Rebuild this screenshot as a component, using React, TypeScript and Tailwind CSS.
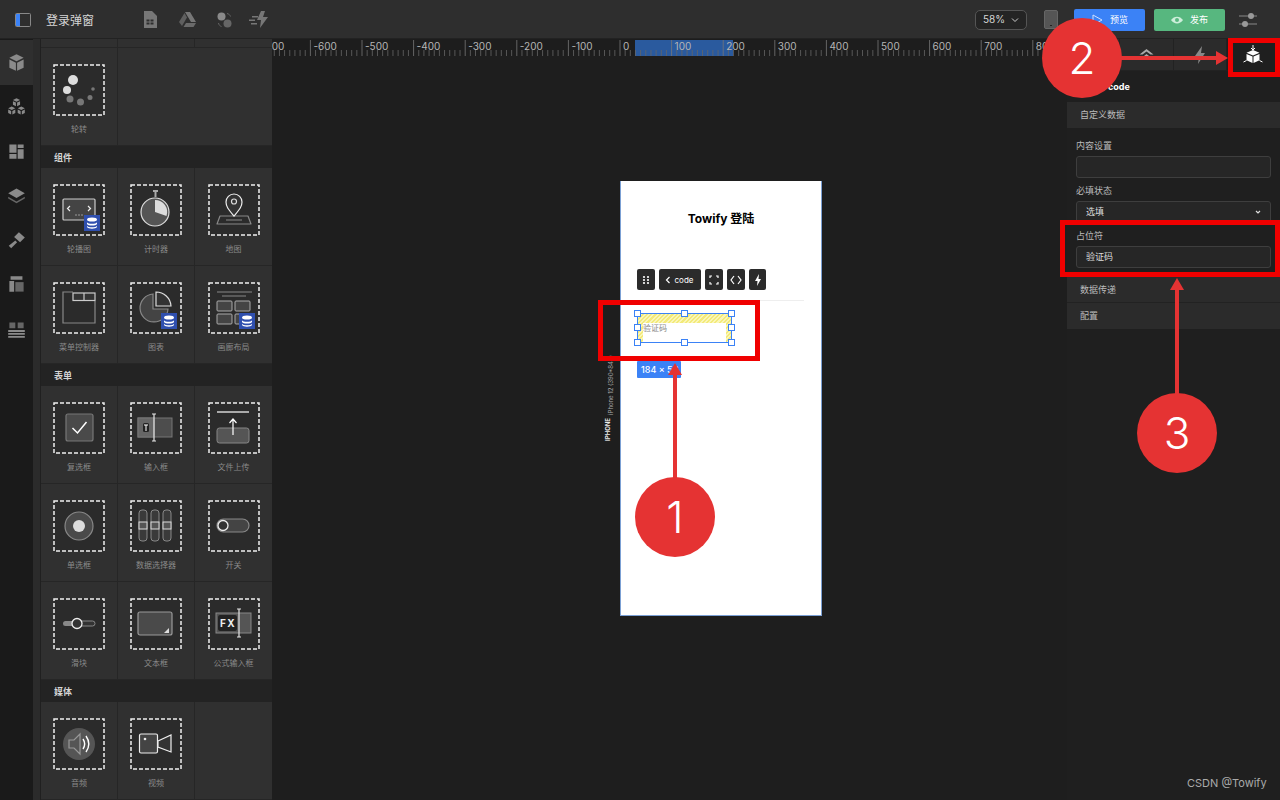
import React from 'react';

const font = { fontFamily: '"Inter", "Noto Sans CJK SC", sans-serif' };

const Db = () => (
  <g>
    <rect x="31" y="31" width="16" height="16" fill="#2f4fae" />
    <ellipse cx="39" cy="35.5" rx="5" ry="2" fill="#fff" />
    <path d="M34 38.2c1 2 9 2 10 0v1.8c-1 2-9 2-10 0zM34 41.8c1 2 9 2 10 0v1.2c-1 2.2-9 2.2-10 0z" fill="#fff" />
  </g>
);

const IBeam = ({ x, y1, y2 }: { x: number; y1: number; y2: number }) => (
  <path d={`M${x - 2} ${y1}h4M${x} ${y1}V${y2}M${x - 2} ${y2}h4`} stroke="#e5e5e5" strokeWidth="1.2" fill="none" />
);

const glyphs: Record<string, React.ReactNode> = {
  spin: (
    <>
      <circle cx="20" cy="16" r="5" fill="#ddd" />
      <circle cx="14" cy="26" r="4" fill="#ddd" />
      <circle cx="17" cy="35" r="3.5" fill="#777" />
      <circle cx="27.5" cy="38" r="3.5" fill="#777" />
      <circle cx="37" cy="33.5" r="2.5" fill="#777" />
      <circle cx="40" cy="25" r="1.8" fill="#777" />
    </>
  ),
  carousel: (
    <>
      <rect x="10" y="15" width="32" height="21" rx="1" fill="#444" stroke="#ccc" strokeWidth="1.2" />
      <path d="M17 22l-2.5 2.5L17 27M35 22l2.5 2.5L35 27" stroke="#eee" strokeWidth="1.2" fill="none" />
      <path d="M22 31h2M25 31h2M28 31h2" stroke="#999" strokeWidth="1" />
      <Db />
    </>
  ),
  timer: (
    <>
      <path d="M23 7h5M25.5 8v5" stroke="#aaa" strokeWidth="2" />
      <circle cx="25" cy="28" r="14" fill="#555" stroke="#ddd" strokeWidth="1.2" />
      <path d="M25 16a12 12 0 0 1 11.5 16L25 28z" fill="#ddd" />
    </>
  ),
  map: (
    <>
      <path d="M12 32h28l3 8H9z" fill="none" stroke="#888" strokeWidth="1.2" strokeLinejoin="round" />
      <path d="M18 36h16" stroke="#888" strokeWidth="1" />
      <path d="M26 32c-5-6-8-9-8-14a8 8 0 0 1 16 0c0 5-3 8-8 14z" fill="#333" stroke="#eee" strokeWidth="1.2" />
      <circle cx="26" cy="17.500" r="2.500" fill="none" stroke="#ddd" strokeWidth="1.200" />
    </>
  ),
  menu: (
    <>
      <path d="M20 10H10v31h32V19" fill="none" stroke="#888" strokeWidth="1.2" />
      <rect x="20" y="11" width="22" height="7.500" fill="#333" stroke="#ccc" strokeWidth="1.2" />
      <path d="M31 11v7.500" stroke="#ccc" strokeWidth="1.2" />
    </>
  ),
  chart: (
    <>
      <path d="M23 12a14 14 0 1 0 15 15H23z" fill="#444" stroke="#888" strokeWidth="1.2" />
      <path d="M26 10a15 15 0 0 1 15 14H26z" fill="#333" stroke="#ddd" strokeWidth="1.2" />
      <Db />
    </>
  ),
  gallery: (
    <>
      <path d="M9 10h35M14 14h24" stroke="#888" strokeWidth="1" />
      <rect x="9" y="19" width="15" height="10" rx="1" fill="#444" stroke="#aaa" />
      <rect x="27" y="19" width="15" height="10" rx="1" fill="#444" stroke="#aaa" />
      <rect x="9" y="32" width="15" height="10" rx="1" fill="#444" stroke="#aaa" />
      <rect x="27" y="32" width="15" height="10" rx="1" fill="#444" stroke="#aaa" />
      <Db />
    </>
  ),
  check: (
    <>
      <rect x="13" y="12" width="27" height="27" rx="2" fill="#4a4a4a" stroke="#777" strokeWidth="1.2" />
      <path d="M19.500 26l5 5 9-11" stroke="#fff" strokeWidth="1.500" fill="none" />
    </>
  ),
  input: (
    <>
      <rect x="8" y="16" width="34" height="19" fill="#4d4d4d" stroke="#777" />
      <rect x="8" y="16" width="16" height="19" fill="#666" stroke="#777" />
      <rect x="13" y="21" width="6" height="9" rx="1.500" fill="#222" />
      <path d="M14 23h4M16 23v6" stroke="#fff" strokeWidth="1" />
      <IBeam x={24} y1={12} y2={39} />
    </>
  ),
  upload: (
    <>
      <path d="M9 10h32" stroke="#eee" strokeWidth="1.300" />
      <rect x="9" y="26" width="32" height="15" rx="2.500" fill="#555" stroke="#888" />
      <path d="M25 33V17M21.500 21l3.500-4 3.500 4" stroke="#fff" strokeWidth="1.200" fill="none" />
    </>
  ),
  radio: (
    <>
      <circle cx="26" cy="26" r="14" fill="#4a4a4a" stroke="#888" strokeWidth="1.200" />
      <circle cx="26" cy="26" r="6" fill="#ddd" />
    </>
  ),
  picker: (
    <>
      {[9, 21, 33].map(x => (
        <g key={x}>
          <rect x={x} y="10" width="8" height="31" rx="3" fill="#3a3a3a" stroke="#888" />
          <rect x={x} y="22" width="8" height="7" fill="#555" stroke="#ddd" />
        </g>
      ))}
    </>
  ),
  toggle: (
    <>
      <rect x="9" y="19" width="32" height="13" rx="6.500" fill="#444" stroke="#888" strokeWidth="1.200" />
      <circle cx="15" cy="25.500" r="5" fill="#333" stroke="#eee" strokeWidth="1.300" />
    </>
  ),
  slider: (
    <>
      <rect x="10" y="23" width="14" height="5" rx="2.500" fill="#888" />
      <rect x="24" y="23" width="18" height="5" rx="2.500" fill="#333" stroke="#888" />
      <circle cx="24" cy="25.500" r="5" fill="#333" stroke="#eee" strokeWidth="1.300" />
    </>
  ),
  textarea: (
    <>
      <rect x="8" y="14" width="34" height="23" rx="2" fill="#4a4a4a" stroke="#999" strokeWidth="1.200" />
      <path d="M39 30v5h-5z" fill="#ddd" />
    </>
  ),
  formula: (
    <>
      <rect x="8" y="15" width="35" height="20" fill="#555" stroke="#888" />
      <rect x="10" y="17" width="19" height="16" rx="2" fill="#222" />
      <text x="12" y="29" fontSize="10" fontWeight="700" fill="#eee" letterSpacing="1.500" fontFamily="Inter, sans-serif">FX</text>
      <IBeam x={31} y1={11} y2={39} />
    </>
  ),
  audio: (
    <>
      <circle cx="26" cy="26" r="16" fill="#555" />
      <path d="M16 22h5l6-6v20l-6-6h-5z" fill="none" stroke="#999" strokeWidth="1.200" />
      <path d="M30 21c2 3 2 7 0 10M33 18c3.500 5 3.500 11 0 16" fill="none" stroke="#fff" strokeWidth="1.400" />
    </>
  ),
  video: (
    <>
      <rect x="9.500" y="16" width="18" height="19" rx="1.500" fill="#444" stroke="#eee" strokeWidth="1.200" />
      <circle cx="15" cy="21" r="1.300" fill="#eee" />
      <path d="M28 23l13-6v17l-13-5z" fill="#333" stroke="#eee" strokeWidth="1.200" />
    </>
  ),
};

const Tile = ({ name, label, last }: { name?: string; label?: string; last?: boolean }) => (
  <div className={`h-[98px] flex flex-col items-center pt-4 border-b border-[#262626] ${last ? '' : 'border-r'}`}>
    {name && (
      <>
        <svg className="w-[52px] h-[52px]" viewBox="0 0 52 52">
          <rect x="1" y="1" width="50" height="50" fill="#262626" fillOpacity="0.4" stroke="#f0f0f0" strokeWidth="1.500" strokeDasharray="4 2" />
          {glyphs[name]}
        </svg>
        <span className="mt-[7px] text-[8px] leading-3 text-[#8a8a8a]">{label}</span>
      </>
    )}
  </div>
);

const Section = ({ title }: { title: string }) => (
  <div className="h-[22px] pt-px bg-[#232323] flex items-center pl-[13px] text-[9px] font-bold text-[#d5d5d5]">{title}</div>
);

const Grid = ({ children }: { children: React.ReactNode }) => <div className="grid grid-cols-3">{children}</div>;

const RailIcon = ({ children, active }: { children: React.ReactNode; active?: boolean }) => (
  <div className={`h-[44.500px] w-[33px] flex items-center justify-center ${active ? 'bg-[#2f2f2f]' : ''}`}>
    <svg className="w-[19px] h-[19px]" viewBox="0 0 16 16" fill="#8a8a8a">{children}</svg>
  </div>
);

const Ruler = () => {
  const zero = 620 - 272;
  const step = 51.6;
  const majors = Array.from({ length: 16 }, (_, i) => i - 7);
  return (
    <div className="h-[17px] bg-[#1d1d1d] overflow-hidden">
      <svg className="w-[795px] h-[17px]" viewBox="0 0 795 17">
        <rect x="363" y="1" width="98" height="16" fill="#2a5a9e" />
        {majors.map(m => (
          <g key={m}>
            <path d={`M${zero + m * step} 1V17`} stroke="#777" strokeWidth="0.800" />
            {[1, 2, 3, 4, 5, 6, 7, 8, 9].map(t => (
              <path key={t} d={`M${zero + (m + t / 10) * step} 11V17`} stroke="#666" strokeWidth="0.800" />
            ))}
            <text x={zero + m * step + 3} y="10.500" fontSize="10" fill="#b5b5b5" fontFamily="Inter, sans-serif">{m * 100}</text>
          </g>
        ))}
      </svg>
    </div>
  );
};

const ToolBtn = ({ w, children }: { w: string; children: React.ReactNode }) => (
  <div className={`${w} h-[21px] bg-[#2b2b2b] rounded-[2px] flex items-center justify-center text-white`}>{children}</div>
);

const Handle = ({ className }: { className: string }) => (
  <div className={`absolute w-[7px] h-[7px] bg-white border border-[#3b82f6] ${className}`} />
);

const Bubble = ({ n, className }: { n: number; className: string }) => (
  <div className={`absolute w-20 h-20 rounded-full bg-[#e53333] flex items-center justify-center text-white text-[44px] font-light ${className}`}>{n}</div>
);

const RedBox = ({ className }: { className: string }) => (
  <div className={`absolute border-[5px] border-[#f00000] ${className}`} />
);

export default function App() {
  return (
    <div className="relative w-[1280px] h-[800px] overflow-hidden bg-[#1e1e1e] flex flex-col" style={font}>
      {/* top bar */}
      <div className="h-[39px] shrink-0 pt-px bg-[#2e2e2e] border-b border-[#222] flex items-center pl-[15px]">
        <svg className="w-4 h-[14px]" viewBox="0 0 16 14">
          <rect x="0.500" y="0.500" width="15" height="13" rx="1" fill="none" stroke="#888" />
          <rect x="1" y="1" width="4" height="12" fill="#3b82f6" />
        </svg>
        <span className="ml-[15px] mt-[3px] text-xs text-[#d5d5d5] w-[90px]">登录弹窗</span>
        <svg className="ml-[7px] w-[14px] h-[17px]" viewBox="0 0 14 17" fill="#777">
          <path d="M1 0h8l5 5v12H1z" />
          <path d="M3.500 8.500h3v2h-3zM7.500 8.500h3v2h-3zM3.500 11.500h3v2h-3zM7.500 11.500h3v2h-3z" fill="#2e2e2e" />
        </svg>
        <svg className="ml-[22px] w-[17px] h-[15px]" viewBox="0 0 17 15" fill="#777">
          <path d="M6 0h5l6 10h-5z" />
          <path d="M5.500 1l2.500 4.500L3 14 0 10z" fill="#5f5f5f" />
          <path d="M4.500 15l2.500-4h10l-2.500 4z" fill="#6a6a6a" />
        </svg>
        <svg className="ml-[21px] w-[15px] h-[16px]" viewBox="0 0 15 16">
          <circle cx="4.500" cy="4.500" r="4" fill="#8a8a8a" />
          <circle cx="10.500" cy="11.500" r="4" fill="#666" />
          <path d="M10 1.500c2 .5 3 1.500 3.500 3M1.500 11c.3 2 1.500 3 3 3.500" fill="none" stroke="#666" />
        </svg>
        <svg className="ml-[17px] w-[19px] h-[17px]" viewBox="0 0 19 17" fill="#777">
          <path d="M12 0l-4 9h4l-1 8 8-11h-5l2-6z" />
          <path d="M3 5h6v1.500H3zM0 8.500h6V10H0zM2 12h6v1.500H2z" />
        </svg>
        <div className="ml-auto flex items-center">
          <div className="w-[52px] h-5 rounded-[5px] bg-[#242424] border border-[#555] flex items-center justify-center gap-[6px] text-[10px] text-[#d5d5d5]">
            <span>58%</span>
            <svg className="w-2 h-2" viewBox="0 0 8 8" fill="none" stroke="#ccc"><path d="M1 2.500l3 3 3-3" /></svg>
          </div>
          <div className="ml-[17px] w-[14px] h-[19px] rounded-[2px] bg-[#555] border border-[#666] flex items-end justify-center pb-[2px]">
            <div className="w-[1.500px] h-[1.500px] bg-[#222]" />
          </div>
          <div className="ml-[16px] w-[71px] h-[22px] rounded-[2px] bg-[#3b82f6] flex items-center justify-center gap-[7px] text-[9px] text-white">
            <svg className="w-3 h-3" viewBox="0 0 12 12" fill="none" stroke="#cfe0ff"><path d="M2 1l9 5-9 5z" /></svg>
            预览
          </div>
          <div className="ml-[9px] w-[71px] h-[22px] rounded-[2px] bg-[#57b77f] flex items-center justify-center gap-[7px] text-[9px] text-white">
            <svg className="w-3 h-3" viewBox="0 0 12 12">
              <path d="M0 6c3-4.500 9-4.500 12 0-3 4.500-9 4.500-12 0z" fill="#cdeeda" />
              <circle cx="6" cy="6" r="2" fill="#57b77f" />
            </svg>
            发布
          </div>
          <svg className="ml-[14px] mr-[23px] w-[18px] h-4" viewBox="0 0 18 16">
            <path d="M0 4h18M0 12h18" stroke="#888" strokeWidth="1.200" />
            <circle cx="12" cy="4" r="3" fill="#999" />
            <circle cx="6" cy="12" r="3" fill="#999" />
          </svg>
        </div>
      </div>

      <div className="flex-1 flex min-h-0">
        {/* left rail */}
        <div className="w-[33px] pt-px bg-[#1a1a1a] shrink-0 flex flex-col">
          <RailIcon active><path d="M8 1l6 3-6 3-6-3zM2 5.500l5.500 2.700V15L2 12.500zM14 5.500L8.500 8.200V15l5.500-2.500z" /></RailIcon>
          <RailIcon><path d="M8 1l3 1.500L8 4 5 2.500zM5 3.500l2.500 1.200v3L5 6.500zM11 3.500L8.500 4.700v3L11 6.500zM4 8l3 1.500L4 11 1 9.500zM1 10.500l2.500 1.200v3L1 13.500zM7 10.500l-2.500 1.200v3L7 13.500zM12 8l3 1.500-3 1.500-3-1.500zM9 10.500l2.500 1.200v3L9 13.500zM15 10.500l-2.500 1.200v3l2.500-1.200z" /></RailIcon>
          <RailIcon><path d="M2 2h6v7H2zM9 2h5v3H9zM9 6h5v8H9zM2 10h6v4H2z" /></RailIcon>
          <RailIcon><path d="M8 2l7 4-7 4-7-4z" /><path d="M1 9l7 4 7-4v1.500l-7 4-7-4z" fill="#666" /></RailIcon>
          <RailIcon><path d="M10 1l5 4.500-4 4-5-4.500z" /><path d="M7 8l1.500 1.500-5 5L1.500 12.500z" /></RailIcon>
          <RailIcon><path d="M2 5h4v9H2zM3 1h10v3H3z" /><path d="M7 6h7v8H7z" fill="#666" /></RailIcon>
          <RailIcon><path d="M2 2h5v5H2zM9 2h5v5H9z" fill="#666" /><path d="M1 8.500h14V10H1zM1 11h14v1.500H1zM1 13.500h14V15H1z" /></RailIcon>
        </div>
        <div className="w-2 shrink-0 bg-[#2b2b2b] border-r border-[#202020]" />

        {/* component panel */}
        <div className="w-[231px] shrink-0 bg-[#303030] overflow-hidden">
          <div className="h-[9px] grid grid-cols-3 border-b border-[#262626]">
            <div className="border-r border-[#262626]" />
            <div className="border-r border-[#262626]" />
            <div />
          </div>
          <div className="flex">
            <div className="w-[77px]"><Tile name="spin" label="轮转" /></div>
            <div className="flex-1 border-b border-[#262626]" />
          </div>
          <Section title="组件" />
          <Grid>
            <Tile name="carousel" label="轮播图" />
            <Tile name="timer" label="计时器" />
            <Tile name="map" label="地图" last />
            <Tile name="menu" label="菜单控制器" />
            <Tile name="chart" label="图表" />
            <Tile name="gallery" label="画廊布局" last />
          </Grid>
          <Section title="表单" />
          <Grid>
            <Tile name="check" label="复选框" />
            <Tile name="input" label="输入框" />
            <Tile name="upload" label="文件上传" last />
            <Tile name="radio" label="单选框" />
            <Tile name="picker" label="数据选择器" />
            <Tile name="toggle" label="开关" last />
            <Tile name="slider" label="滑块" />
            <Tile name="textarea" label="文本框" />
            <Tile name="formula" label="公式输入框" last />
          </Grid>
          <Section title="媒体" />
          <Grid>
            <Tile name="audio" label="音频" />
            <Tile name="video" label="视频" />
            <Tile last />
          </Grid>
        </div>

        {/* canvas */}
        <div className="relative flex-1 min-w-0 bg-[#1e1e1e]">
          <Ruler />
          <span className="absolute left-[336px] top-[316px] [writing-mode:vertical-rl] rotate-180 text-[6px] leading-none text-[#aaa]">iPhone 12 (390*844)</span>
          <span className="absolute left-[333px] top-[379px] [writing-mode:vertical-rl] rotate-180 text-[6px] leading-none font-bold text-[#eee]">IPHONE</span>

          {/* phone artboard */}
          <div className="absolute left-[348px] top-[142px] w-[202px] h-[435px] bg-white border-l border-r border-b border-[#7ba0d4]">
            <div className="mt-[30px] text-center text-xs font-bold leading-[16px] text-black">Towify 登陆</div>
            <div className="absolute left-4 top-[88px] flex gap-1">
              <ToolBtn w="w-[18px]">
                <svg className="w-[10px] h-[10px]" viewBox="0 0 10 10" fill="#fff">
                  {[2, 5, 8].map(y => [3, 7].map(x => <circle key={`${x}-${y}`} cx={x} cy={y} r="1.100" />))}
                </svg>
              </ToolBtn>
              <ToolBtn w="w-[42px]">
                <svg className="w-2 h-2 mr-[3px] -ml-[3px]" viewBox="0 0 8 8" fill="none" stroke="#fff" strokeWidth="1.200"><path d="M5.500 1L2.500 4l3 3" /></svg>
                <span className="text-[8px]">code</span>
              </ToolBtn>
              <ToolBtn w="w-[18px]">
                <svg className="w-[10px] h-[10px]" viewBox="0 0 10 10" fill="none" stroke="#fff" strokeWidth="1.200"><path d="M1 3V1h2M7 1h2v2M9 7v2H7M3 9H1V7" /></svg>
              </ToolBtn>
              <ToolBtn w="w-[18px]">
                <svg className="w-[12px] h-[10px]" viewBox="0 0 12 10" fill="none" stroke="#fff" strokeWidth="1.200"><path d="M4 1L1 5l3 4M8 1l3 4-3 4" /></svg>
              </ToolBtn>
              <ToolBtn w="w-[17px]">
                <svg className="w-2 h-3" viewBox="0 0 8 12" fill="#fff"><path d="M5 0L1 7h2.500L3 12l4-7H4.500z" /></svg>
              </ToolBtn>
            </div>
            <div className="absolute left-[15px] top-[119px] w-[168px] h-px bg-[#eee]" />

            {/* selected input */}
            <div className="absolute left-4 top-[132px] w-[95px] h-[30px] border border-[#3b82f6] bg-[repeating-linear-gradient(135deg,#f3ea7a_0,#f3ea7a_1.500px,#faf6b8_1.500px,#faf6b8_3px)]">
              <div className="mt-[9px] mx-[5px] h-[19px] bg-white text-[8px] leading-[10px] text-[#888]">验证码</div>
              <Handle className="-left-1 -top-1" />
              <Handle className="left-[43px] -top-1" />
              <Handle className="-right-1 -top-1" />
              <Handle className="-left-1 top-[10px]" />
              <Handle className="-right-1 top-[10px]" />
              <Handle className="-left-1 -bottom-1" />
              <Handle className="left-[43px] -bottom-1" />
              <Handle className="-right-1 -bottom-1" />
            </div>
            <div className="absolute left-4 top-[180px] w-11 h-[17px] rounded-[1px] bg-[#3b82f6] text-[9px] font-medium leading-[17px] pl-[4px] text-white whitespace-nowrap">184 x 56</div>
          </div>
        </div>

        {/* right panel */}
        <div className="w-[213px] shrink-0 bg-[#1f1f1f] text-[9px] text-[#bbb]">
          <div className="h-8 grid grid-cols-4 bg-[#2b2b2b] border-b border-[#222]">
            <div className="border-r border-[#222]" />
            <div className="border-r border-[#222] flex items-center justify-center">
              <svg className="w-[15px] h-[14px]" viewBox="0 0 15 14" fill="#aaa"><path d="M7.500 1l7 5.500h-3L7.500 3.500l-4 3h-3zM5 8l2.500-2 2.500 2z" /></svg>
            </div>
            <div className="border-r border-[#222] flex items-center justify-center">
              <svg className="w-[12px] h-[18px]" viewBox="0 0 12 18" fill="#888"><path d="M8 0L1 10h4l-1 8 7-11H7z" /></svg>
            </div>
            <div className="bg-[#1f1f1f] flex items-center justify-center">
              <svg className="w-5 h-5" viewBox="0 0 20 20">
                <path d="M10 5l6.500 2.800-6.500 2.800-6.500-2.800z" fill="#fff" />
                <path d="M3.500 9l6 2.500V18l-6-2.800zM16.500 9l-6 2.500V18l6-2.800z" fill="#fff" />
                <path d="M10 0v5M8 3l2 2 2-2M0.500 17l3-1.500M19.500 17l-3-1.500" stroke="#fff" fill="none" />
              </svg>
            </div>
          </div>
          <div className="h-[31px] flex items-center pl-[41px] text-[9px] font-bold text-white">code</div>
          <div className="h-[26px] bg-[#2b2b2b] flex items-center pl-[13px]">自定义数据</div>
          <div className="px-[9px]">
            <div className="mt-3 leading-[12px]">内容设置</div>
            <div className="mt-[4px] h-[22px] rounded-[3px] border border-[#3e3e3e] bg-[#262626]" />
            <div className="mt-[7px] leading-[12px]">必填状态</div>
            <div className="mt-[4px] h-[22px] rounded-[3px] border border-[#3e3e3e] bg-[#262626] flex items-center justify-between px-[9px] text-[#ddd]">
              <span>选填</span>
              <svg className="w-[6px] h-[6px]" viewBox="0 0 6 6" fill="none" stroke="#ddd" strokeWidth="1.200"><path d="M1 2l2 2 2-2" /></svg>
            </div>
            <div className="mt-[7px] leading-[12px]">占位符</div>
            <div className="mt-[4px] h-[22px] rounded-[3px] border border-[#3e3e3e] bg-[#262626] flex items-center px-[9px] text-[#ddd]">验证码</div>
          </div>
          <div className="mt-[9px] h-[26px] bg-[#2b2b2b] border-b border-[#222] flex items-center pl-[13px]">数据传递</div>
          <div className="h-[26px] bg-[#2b2b2b] flex items-center pl-[13px]">配置</div>
        </div>
      </div>

      {/* annotations */}
      <RedBox className="left-[598px] top-[300px] w-[162px] h-[61px]" />
      <RedBox className="left-[1228px] top-[38px] w-[52px] h-[39px]" />
      <RedBox className="left-[1060px] top-[220px] w-[220px] h-[57px]" />
      <svg className="absolute left-0 top-0 w-[1280px] h-[800px] pointer-events-none" viewBox="0 0 1280 800">
        <path d="M675 480V375" stroke="#e53333" strokeWidth="4" />
        <path d="M668 375l7-12 7 12z" fill="#e53333" />
        <path d="M1120 58h98" stroke="#e53333" strokeWidth="4" />
        <path d="M1216 51l12 7-12 7z" fill="#e53333" />
        <path d="M1177 395V290" stroke="#e53333" strokeWidth="4" />
        <path d="M1170 290l7-12 7 12z" fill="#e53333" />
      </svg>
      <Bubble n={1} className="left-[635px] top-[477px]" />
      <Bubble n={2} className="left-[1042px] top-[18px]" />
      <Bubble n={3} className="left-[1137px] top-[393px]" />
      <span className="absolute left-[1187px] top-[776px] text-[11px] leading-[14px] text-[#aaa]">CSDN @Towify</span>
    </div>
  );
}
